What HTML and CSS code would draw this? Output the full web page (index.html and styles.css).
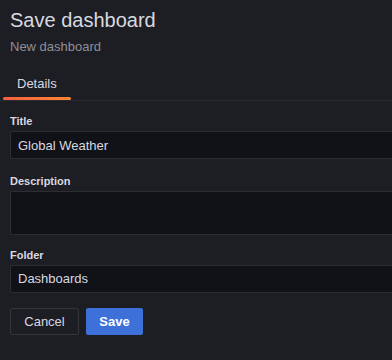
FILE: index.html
```html
<!DOCTYPE html>
<html lang="en">
<head>
  <meta charset="UTF-8">
  <title>Save dashboard</title>
  <link rel="stylesheet" href="styles.css">
</head>
<body>
  <div class="drawer">
    <header class="drawer-header">
      <h1>Save dashboard</h1>
      <div class="subtitle">New dashboard</div>
    </header>

    <!-- Tabs -->
    <div class="tabs">
      <button class="tab active">Details</button>
    </div>

    <!-- Form -->
    <form class="save-form">
      <div class="field">
        <label for="title">Title</label>
        <input type="text" id="title" value="Global Weather">
      </div>
      <div class="field field-tight">
        <label for="description">Description</label>
        <textarea id="description"></textarea>
      </div>
      <div class="field">
        <label for="folder">Folder</label>
        <div class="select" id="folder">Dashboards</div>
      </div>

      <div class="actions">
        <button type="button" class="btn btn-secondary">Cancel</button>
        <button type="button" class="btn btn-primary">Save</button>
      </div>
    </form>
  </div>
</body>
</html>
```

FILE: styles.css
```css
* {
  box-sizing: border-box;
  margin: 0;
  padding: 0;
}

html, body {
  height: 100%;
  overflow: hidden;
}

body {
  font-family: 'Liberation Sans', Arial, sans-serif;
  background-color: #1d1e23;
  color: #ccccdc;
}

.drawer {
  width: 100%;
}

.drawer-header {
  padding: 8px 10px 0;
}

h1 {
  font-size: 20px;
  font-weight: 400;
  line-height: 24px;
  color: #d8d9e0;
}

.subtitle {
  margin-top: 7px;
  font-size: 13px;
  line-height: 16px;
  color: #8e8f99;
}

.tabs {
  display: flex;
  margin-top: 17px;
  border-bottom: 1px solid #2a2b31;
}

.tab {
  position: relative;
  width: 68px;
  padding: 4px 14px 8px;
  margin-left: 3px;
  background: none;
  border: none;
  font-family: inherit;
  font-size: 13px;
  line-height: 16px;
  color: #d8d9e0;
  text-align: left;
}

.tab.active::after {
  content: '';
  position: absolute;
  left: 0;
  right: 0;
  bottom: 0;
  height: 3px;
  border-radius: 2px;
  background: linear-gradient(90deg, #f55f3e, #ff8833);
}

.save-form {
  padding: 14px 0 0 10px;
}

.field {
  margin-bottom: 16px;
}

.field-tight {
  margin-bottom: 14px;
}

label {
  display: block;
  font-size: 11px;
  font-weight: 700;
  line-height: 13px;
  color: #d8d9e0;
  margin-bottom: 3px;
}

input[type="text"], textarea, .select {
  display: block;
  width: 100%;
  background-color: #111217;
  border: 1px solid #2d2e34;
  border-right: none;
  border-radius: 2px 0 0 2px;
  color: #d8d9e0;
  font-family: inherit;
  font-size: 13px;
  padding: 0 7px;
}

input[type="text"], .select {
  height: 28px;
  line-height: 26px;
}

textarea {
  height: 44px;
  resize: none;
}

.actions {
  display: flex;
  gap: 7px;
  margin-top: -1px;
}

.btn {
  height: 27px;
  padding: 0;
  font-family: inherit;
  font-size: 13px;
  border-radius: 2px;
  cursor: pointer;
}

.btn-secondary {
  width: 69px;
  background: transparent;
  border: 1px solid #34353b;
  color: #d8d9e0;
}

.btn-primary {
  width: 57px;
  background-color: #3d71d9;
  border: none;
  color: #fff;
  font-weight: 700;
}
```
